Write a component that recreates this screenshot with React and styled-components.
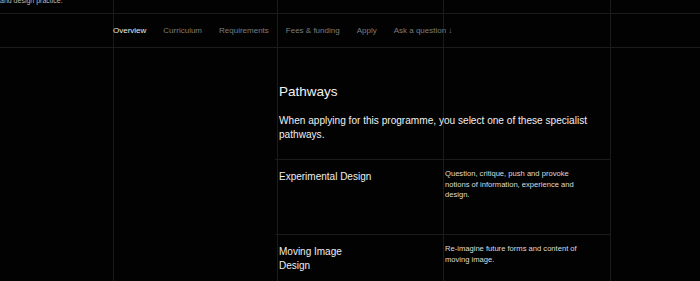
import React from "react"
import styled, { createGlobalStyle } from "styled-components"

const GlobalStyle = createGlobalStyle`
  html, body {
    margin: 0;
    padding: 0;
    background: #020202;
  }
  body {
    font-family: "Liberation Sans", Arial, sans-serif;
    color: #eee;
  }
`

const line = "#1b1b1b"

const Page = styled.div`
  width: 700px;
  height: 281px;
  overflow: hidden;
  background-color: #020202;
  background-image:
    linear-gradient(${line}, ${line}),
    linear-gradient(${line}, ${line}),
    linear-gradient(${line}, ${line}),
    linear-gradient(${line}, ${line});
  background-size: 1px 100%;
  background-repeat: no-repeat;
  background-position: 113px 0, 277px 0, 443px 0, 610px 0;
`

const TopStrip = styled.div`
  height: 13px;
  overflow: hidden;
  border-bottom: 1px solid ${line};
  font-size: 7px;
  line-height: 8px;
  color: #bbb;

  span {
    display: block;
    margin-top: -3px;
  }
`

const Nav = styled.nav`
  display: flex;
  align-items: center;
  gap: 17px;
  height: 33px;
  padding-left: 113px;
  border-bottom: 1px solid ${line};
`

const NavItem = styled.a`
  font-size: 8px;
  text-decoration: none;
  color: ${(p) => (p.$active ? "#eaeaea" : "#7c7c7c")};
  white-space: nowrap;
`

const Content = styled.main`
  width: 331px;
  margin-left: 279px;
  padding-top: 36px;
`

const Heading = styled.h2`
  margin: 0;
  font-size: 13.5px;
  line-height: 16px;
  font-weight: normal;
  color: #f2f2f2;
`

const Intro = styled.p`
  margin: 14px 0 17px;
  font-size: 10.1px;
  line-height: 14px;
  color: #f0f0f0;
`

const Table = styled.div`
  margin-left: -4px;
  width: 335px;
`

const Row = styled.div`
  display: grid;
  grid-template-columns: 168px 1fr;
  height: 74px;
  border-top: 1px solid ${line};
`

const Title = styled.div`
  padding: 10px 0 0 4px;
  max-width: 96px;
  font-size: 10px;
  line-height: 14px;
  color: #eee;
`

const Desc = styled.div`
  padding: 9px 0 0 2px;
  max-width: 140px;
  font-size: 7.6px;
  line-height: 10.5px;
  color: #ddd;
`

const navLinks = ["Overview", "Curriculum", "Requirements", "Fees & funding", "Apply"]

const pathways = [
  {
    title: "Experimental Design",
    desc: "Question, critique, push and provoke notions of information, experience and design.",
  },
  {
    title: "Moving Image Design",
    desc: "Re-imagine future forms and content of moving image.",
  },
]

export default function App() {
  return (
    <Page>
      <GlobalStyle />
      <TopStrip>
        <span>and design practice.</span>
      </TopStrip>
      <Nav>
        {navLinks.map((l, i) => (
          <NavItem key={l} href="#" $active={i === 0}>
            {l}
          </NavItem>
        ))}
        <NavItem href="#">Ask a question ↓</NavItem>
      </Nav>
      <Content>
        <Heading>Pathways</Heading>
        <Intro>When applying for this programme, you select one of these specialist pathways.</Intro>
        <Table>
          {pathways.map((p) => (
            <Row key={p.title}>
              <Title>{p.title}</Title>
              <Desc>{p.desc}</Desc>
            </Row>
          ))}
        </Table>
      </Content>
    </Page>
  )
}
